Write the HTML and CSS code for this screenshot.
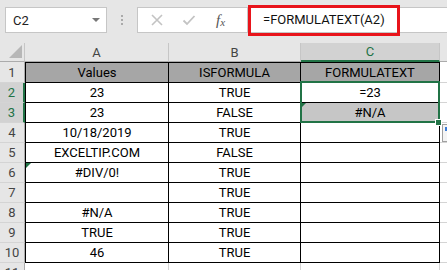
FILE: index.html
```html
<!DOCTYPE html>
<html lang="en">
<head>
    <meta charset="UTF-8">
    <title>FORMULATEXT</title>
    <link rel="stylesheet" href="styles.css">
</head>
<body>
<div class="toolbar">
    <div class="name-box">
        <span>C2</span>
        <span class="drop-arrow"></span>
    </div>
    <div class="grip"><i></i><i></i><i></i></div>
    <div class="fx-group">
        <svg class="btn" width="14" height="14" viewBox="0 0 14 14">
            <path d="M2 2 L12 12 M12 2 L2 12" stroke="#c3c3c3" stroke-width="1.6" fill="none"/>
        </svg>
        <svg class="btn" width="14" height="14" viewBox="0 0 14 14">
            <path d="M1.5 7.5 L5 11 L12.5 3" stroke="#c3c3c3" stroke-width="1.8" fill="none"/>
        </svg>
        <span class="fx"><i>f</i><sub>x</sub></span>
    </div>
    <div class="formula-input">=FORMULATEXT(A2)</div>
    <div class="callout"></div>
</div>

<div class="sheet">
    <div class="corner"><span class="corner-tri"></span></div>
    <div class="col-head">A</div>
    <div class="col-head">B</div>
    <div class="col-head active">C</div>
    <div class="col-head last"></div>

    <div class="row-head">1</div>
    <div class="cell col-a title first">Values</div>
    <div class="cell title first">ISFORMULA</div>
    <div class="cell title first">FORMULATEXT</div>
    <div class="pad"></div>

    <div class="row-head active">2</div>
    <div class="cell col-a">23</div>
    <div class="cell">TRUE</div>
    <div class="cell">=23</div>
    <div class="pad"></div>

    <div class="row-head active">3</div>
    <div class="cell col-a">23</div>
    <div class="cell">FALSE</div>
    <div class="cell shaded">#N/A</div>
    <div class="pad"></div>

    <div class="row-head">4</div>
    <div class="cell col-a">10/18/2019</div>
    <div class="cell">TRUE</div>
    <div class="cell"></div>
    <div class="pad"></div>

    <div class="row-head">5</div>
    <div class="cell col-a">EXCELTIP.COM</div>
    <div class="cell">FALSE</div>
    <div class="cell"></div>
    <div class="pad"></div>

    <div class="row-head">6</div>
    <div class="cell col-a">#DIV/0!</div>
    <div class="cell">TRUE</div>
    <div class="cell"></div>
    <div class="pad"></div>

    <div class="row-head">7</div>
    <div class="cell col-a"></div>
    <div class="cell">TRUE</div>
    <div class="cell"></div>
    <div class="pad"></div>

    <div class="row-head">8</div>
    <div class="cell col-a">#N/A</div>
    <div class="cell">TRUE</div>
    <div class="cell"></div>
    <div class="pad"></div>

    <div class="row-head">9</div>
    <div class="cell col-a">TRUE</div>
    <div class="cell">TRUE</div>
    <div class="cell"></div>
    <div class="pad"></div>

    <div class="row-head">10</div>
    <div class="cell col-a">46</div>
    <div class="cell">TRUE</div>
    <div class="cell"></div>
    <div class="pad"></div>

    <div class="row-head">11</div>
    <div class="blank"></div>
    <div class="blank"></div>
    <div class="blank"></div>
    <div class="pad"></div>

    <!-- overlays -->
    <div class="selection"></div>
    <div class="fill-handle"></div>
    <div class="err-mark mark-c3"></div>
    <div class="err-mark mark-a6"></div>
    <div class="quick-btn"><span></span></div>
</div>
</body>
</html>
```

FILE: styles.css
```css
body {
    margin: 0;
    width: 447px;
    height: 270px;
    overflow: hidden;
    background-color: #e6e6e6;
    font-family: Roboto, 'Liberation Sans', sans-serif;
}

/* formula bar */
.toolbar {
    position: relative;
    display: flex;
    align-items: flex-start;
    height: 43px;
    padding-top: 7px;
    box-sizing: border-box;
}

.name-box {
    display: flex;
    align-items: center;
    justify-content: space-between;
    width: 102px;
    height: 26px;
    margin-left: 5px;
    padding: 0 6px 0 7px;
    box-sizing: border-box;
    background-color: #fff;
    border: 1px solid #c6c6c6;
    font-size: 13px;
    color: #222;
}

.drop-arrow {
    width: 0;
    height: 0;
    border-left: 4px solid transparent;
    border-right: 4px solid transparent;
    border-top: 4px solid #777;
}

.grip {
    display: flex;
    flex-direction: column;
    align-items: center;
    gap: 2px;
    width: 30px;
    padding-top: 8px;
}

.grip i {
    width: 2px;
    height: 2px;
    background-color: #aaa;
}

.fx-group {
    display: flex;
    align-items: center;
    width: 111px;
    height: 26px;
    box-sizing: border-box;
    background-color: #fff;
    border: 1px solid #c6c6c6;
    padding-left: 12px;
}

.fx-group .btn {
    margin-right: 18px;
}

.fx {
    margin-left: 2px;
    font-family: 'Liberation Serif', serif;
    font-size: 15px;
    color: #555;
}

.fx sub {
    font-style: italic;
    font-size: 11px;
    vertical-align: -1px;
}

.formula-input {
    flex: 1;
    height: 26px;
    box-sizing: border-box;
    background-color: #fff;
    border: 1px solid #c6c6c6;
    border-right: none;
    padding-left: 14px;
    line-height: 24px;
    font-size: 13px;
    color: #111;
}

.callout {
    position: absolute;
    left: 248px;
    top: 5px;
    width: 152px;
    height: 31px;
    box-sizing: border-box;
    border: 3px solid #e8141b;
}

/* worksheet grid */
.sheet {
    position: relative;
    display: grid;
    grid-template-columns: 25px 144px 132px 139px 1fr;
    grid-template-rows: 19px 21px repeat(10, 20px);
    background-color: #fff;
    font-size: 13px;
}

.corner,
.col-head,
.row-head {
    display: flex;
    align-items: center;
    justify-content: center;
    box-sizing: border-box;
    background-color: #e6e6e6;
    color: #444;
    font-size: 13px;
}

.corner {
    position: relative;
    border-right: 1px solid #c6c6c6;
    border-bottom: 1px solid #ababab;
}

.corner-tri {
    position: absolute;
    right: 2px;
    bottom: 3px;
    width: 0;
    height: 0;
    border-left: 13px solid transparent;
    border-bottom: 13px solid #b7b7b7;
}

.col-head {
    border-right: 1px solid #c6c6c6;
    border-bottom: 1px solid #ababab;
}

.col-head.active {
    background-color: #d2d2d2;
    color: #217346;
    border-bottom: 2px solid #217346;
}

.col-head.last {
    border-right: none;
}

.row-head {
    border-right: 1px solid #ababab;
    border-bottom: 1px solid #d4d4d4;
}

.row-head.active {
    background-color: #d2d2d2;
    color: #217346;
    border-right: 2px solid #217346;
}

.cell {
    display: flex;
    align-items: center;
    justify-content: center;
    box-sizing: border-box;
    border-right: 1px solid #000;
    border-bottom: 1px solid #000;
    color: #000;
    white-space: nowrap;
}

.cell.col-a {
    border-left: 1px solid #000;
}

.cell.first {
    border-top: 1px solid #000;
}

.cell.title {
    background-color: #a6a6a6;
}

.cell.shaded {
    background-color: #c6c6c6;
}

.blank {
    border-right: 1px solid #d4d4d4;
}

.pad {
    border-bottom: 1px solid #d4d4d4;
}

/* selection and markers drawn over the grid */
.selection {
    position: absolute;
    left: 300px;
    top: 38px;
    width: 140px;
    height: 42px;
    box-sizing: border-box;
    border: 2px solid #217346;
}

.fill-handle {
    position: absolute;
    left: 435px;
    top: 76px;
    width: 5px;
    height: 5px;
    background-color: #217346;
    border: 1px solid #fff;
}

.err-mark {
    position: absolute;
    width: 0;
    height: 0;
    border-top: 5px solid #217346;
    border-right: 5px solid transparent;
}

.mark-c3 {
    left: 301px;
    top: 60px;
}

.mark-a6 {
    left: 26px;
    top: 120px;
}

.quick-btn {
    position: absolute;
    left: 442px;
    top: 81px;
    width: 10px;
    height: 18px;
    box-sizing: border-box;
    border: 1px solid #a0a0a0;
    background-color: #f4f4f4;
}

.quick-btn span {
    display: block;
    width: 4px;
    height: 4px;
    margin: 2px 0 0 2px;
    background-color: #3b7dd8;
}
```
